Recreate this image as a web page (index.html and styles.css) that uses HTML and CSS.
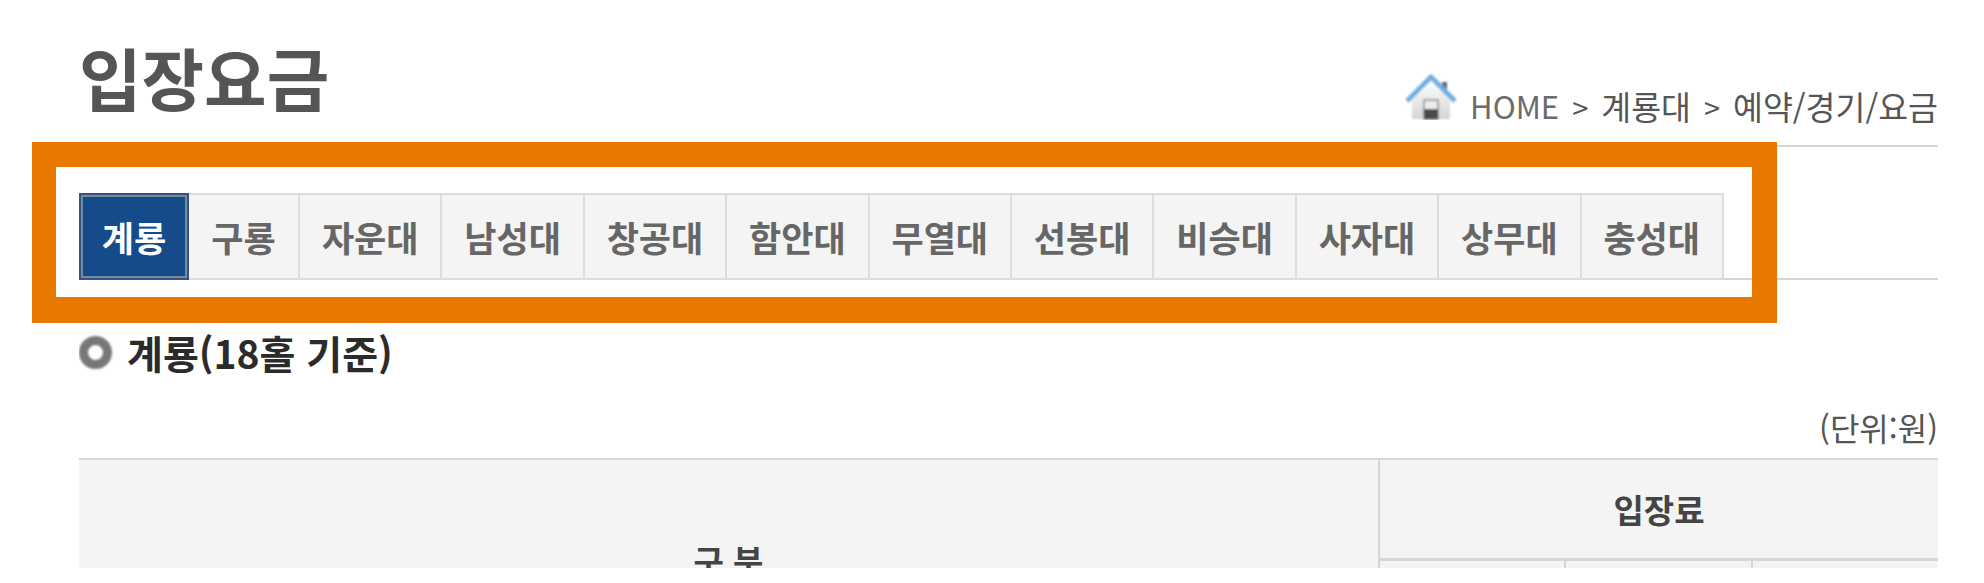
FILE: index.html
```html
<!DOCTYPE html>
<html lang="ko">
<head>
  <meta charset="UTF-8" />
  <title>입장요금</title>
  <link rel="stylesheet" href="styles.css">
</head>
<body>
  <div class="page">
    <header class="page-head">
      <h1>입장요금</h1>
      <nav class="crumbs" aria-label="breadcrumb">
        <svg class="home-icon" viewBox="0 0 52 46" width="52" height="46" aria-hidden="true">
          <defs>
            <linearGradient id="wall" x1="0" y1="0" x2="0" y2="1">
              <stop offset="0" stop-color="#ffffff" />
              <stop offset="1" stop-color="#d4d4d4" />
            </linearGradient>
            <filter id="soft"><feGaussianBlur stdDeviation="0.9" /></filter>
          </defs>
          <g filter="url(#soft)">
            <rect x="37" y="8" width="5" height="15" fill="#666" />
            <path d="M7 25 L26 7 L45 25 V45 H7 Z" fill="url(#wall)" />
            <path d="M2 27 L26 3 L50 27" fill="none" stroke="#6fb0e2" stroke-width="5" />
            <rect x="19" y="26" width="14" height="19" fill="#ececec" stroke="#8a8a8a" stroke-width="1.5" />
            <rect x="19" y="35" width="14" height="10" fill="#4a4a4a" />
          </g>
        </svg>
        <span class="crumb-home">HOME</span>
        <span class="crumb-sep">&gt;</span>
        <span>계룡대</span>
        <span class="crumb-sep">&gt;</span>
        <span>예약/경기/요금</span>
      </nav>
    </header>

    <ul class="tabs">
      <li class="tab active">계룡</li>
      <li class="tab">구룡</li>
      <li class="tab">자운대</li>
      <li class="tab">남성대</li>
      <li class="tab">창공대</li>
      <li class="tab">함안대</li>
      <li class="tab">무열대</li>
      <li class="tab">선봉대</li>
      <li class="tab">비승대</li>
      <li class="tab">사자대</li>
      <li class="tab">상무대</li>
      <li class="tab">충성대</li>
    </ul>

    <h2 class="section-title"><span class="bullet"></span>계룡(18홀 기준)</h2>
    <p class="unit">(단위:원)</p>

    <table class="fees">
      <colgroup>
        <col class="col-type" />
        <col class="col-fee" />
        <col class="col-fee" />
        <col class="col-fee" />
      </colgroup>
      <tr>
        <th rowspan="2" class="th-type">구 분</th>
        <th colspan="3" class="th-fee">입장료</th>
      </tr>
      <tr>
        <th class="th-sub">&nbsp;</th>
        <th class="th-sub">&nbsp;</th>
        <th class="th-sub">&nbsp;</th>
      </tr>
    </table>
  </div>

  <div class="highlight"></div>
</body>
</html>
```

FILE: styles.css
```css
:root {
  --line: #d6d6d6;
  --cell: #f4f4f4;
  --font-family: 'Noto Sans CJK KR', 'Noto Sans', sans-serif;
}

html,
body {
  margin: 0;
  height: 583px;
  overflow: hidden;
  background: #fff;
}

body {
  font-family: var(--font-family);
  color: #555;
}

.page {
  box-sizing: border-box;
  width: 1938px;
  height: 568px;
  margin-left: 79px;
  overflow: hidden;
}

.page-head {
  box-sizing: border-box;
  height: 147px;
  padding-top: 28px;
  display: flex;
  justify-content: space-between;
  align-items: flex-start;
  border-bottom: 2px solid var(--line);
  width: 1859px;
}

.page-head h1 {
  margin: 0;
  font-size: 68px;
  line-height: 98px;
  font-weight: 700;
  color: #555;
}

.crumbs {
  display: flex;
  align-items: flex-end;
  gap: 13px;
  margin-top: 46px;
  font-size: 32.5px;
  line-height: 46px;
}

.home-icon {
  margin-bottom: 9px;
}

.crumb-home {
  color: #6b6b6b;
  font-size: 31px;
}

.crumb-sep {
  font-size: 29px;
}

.tabs {
  list-style: none;
  margin: 46px 0 0;
  padding: 0;
  display: flex;
  width: 1859px;
  height: 87px;
  box-sizing: border-box;
  border-bottom: 2px solid var(--line);
}

.tab {
  box-sizing: border-box;
  height: 87px;
  width: 142.4px;
  display: flex;
  align-items: center;
  justify-content: center;
  background: var(--cell);
  border: 2px solid #dcdcdc;
  border-left: 0;
  font-size: 35px;
  font-weight: 700;
  color: #666;
}

.tab:nth-child(-n+2) {
  width: 110px;
}

.tab:nth-child(2) {
  width: 111px;
}

.tab.active {
  background: #154b8b;
  border: 2px solid #3a4f86;
  outline: 2px solid #6f8f92;
  outline-offset: -4px;
  color: #fff;
}

.section-title {
  display: flex;
  align-items: center;
  gap: 15px;
  margin: 45px 0 0;
  font-size: 39px;
  line-height: 54px;
  font-weight: 700;
  color: #2b2b2b;
}

.bullet {
  box-sizing: border-box;
  width: 33px;
  height: 33px;
  border: 9px solid #777;
  border-radius: 50%;
  background: #fff;
  filter: blur(1px);
}

.unit {
  margin: 25px 0 0;
  width: 1859px;
  text-align: right;
  font-size: 32px;
  line-height: 46px;
  color: #555;
}

.fees {
  width: 1859px;
  margin-top: 8px;
  border-collapse: collapse;
  table-layout: fixed;
  border-top: 2px solid var(--line);
}

.col-type {
  width: 1300px;
}

.fees th {
  background: var(--cell);
  border-left: 2px solid var(--line);
  padding: 0;
  font-size: 33px;
  font-weight: 700;
  color: #444;
}

.fees tr:first-child th:first-child {
  border-left: 0;
}

.th-fee {
  height: 98px;
  border-bottom: 3px solid var(--line);
}

.th-sub {
  height: 99px;
}

.highlight {
  position: absolute;
  box-sizing: border-box;
  left: 32px;
  top: 142px;
  width: 1745px;
  height: 181px;
  border-style: solid;
  border-color: #e87700;
  border-width: 25px 25px 26px 24px;
}
```
